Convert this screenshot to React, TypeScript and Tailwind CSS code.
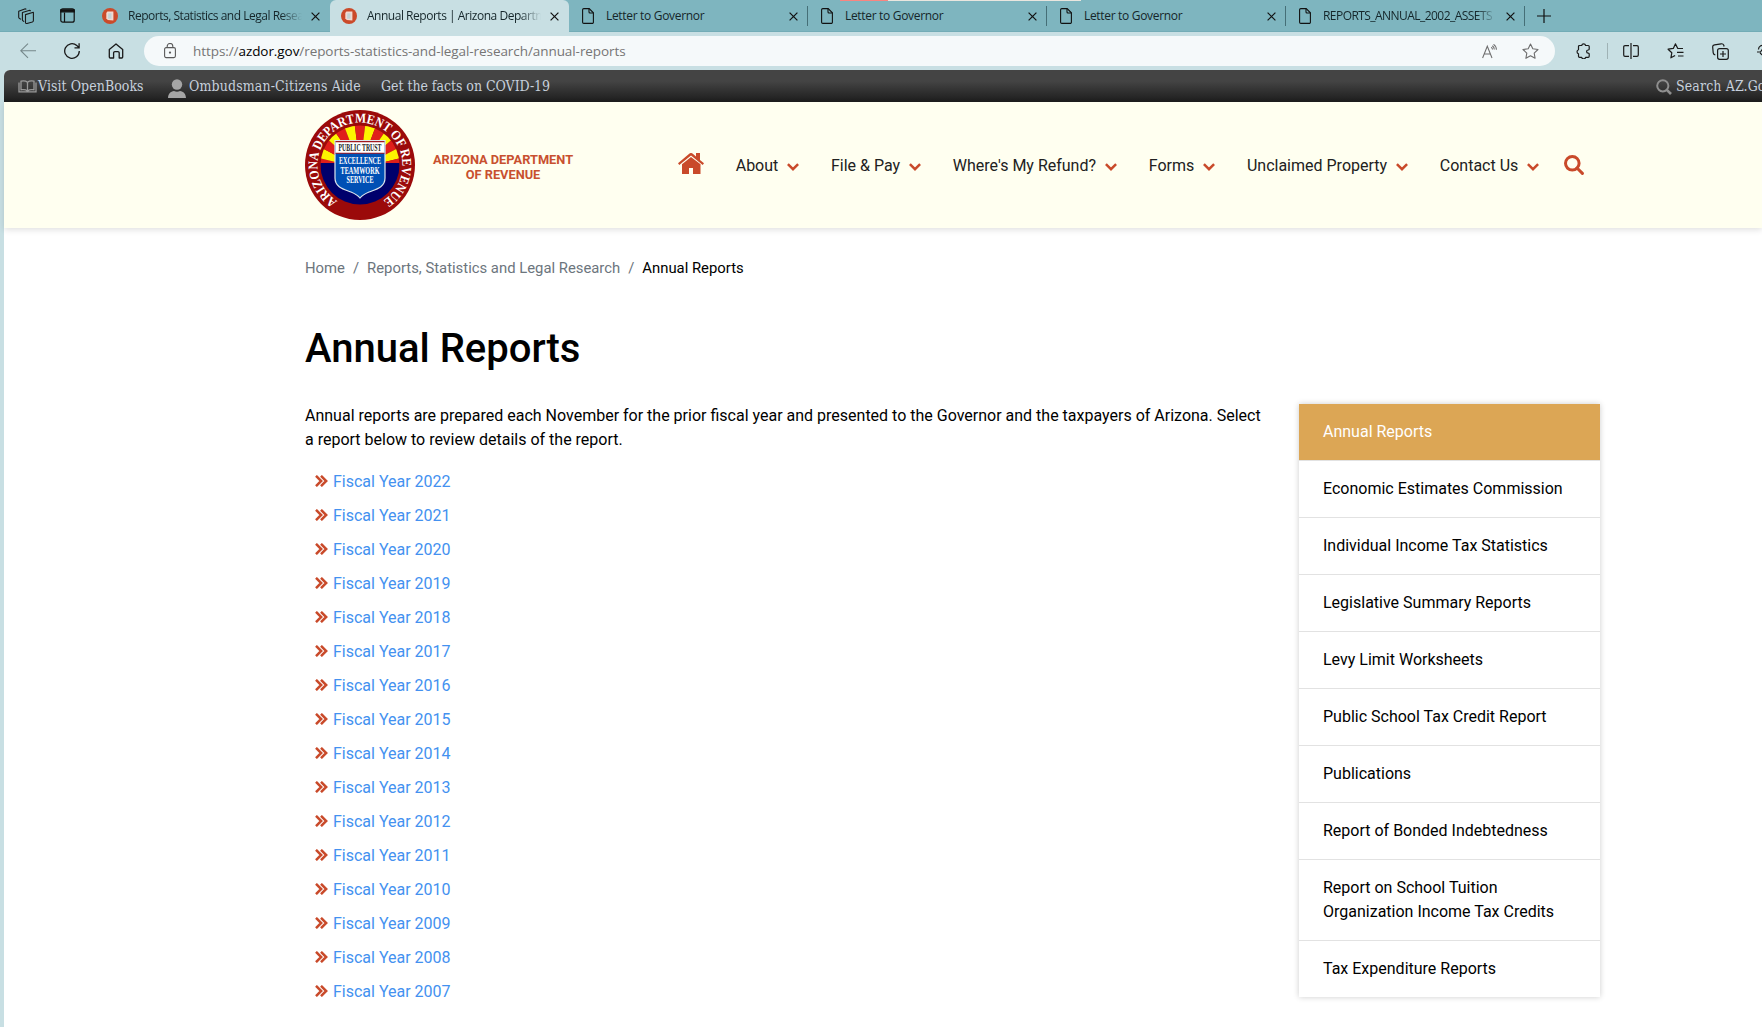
import type { ReactNode } from 'react'

const years = Array.from({ length: 16 }, (_, i) => 2022 - i)

const sideLinks = [
  'Economic Estimates Commission',
  'Individual Income Tax Statistics',
  'Legislative Summary Reports',
  'Levy Limit Worksheets',
  'Public School Tax Credit Report',
  'Publications',
  'Report of Bonded Indebtedness',
  'Report on School Tuition Organization Income Tax Credits',
  'Tax Expenditure Reports',
]

const navItems = ['About', 'File & Pay', "Where's My Refund?", 'Forms', 'Unclaimed Property', 'Contact Us']

function Favicon() {
  return (
    <svg className="h-4 w-4 shrink-0" viewBox="0 0 16 16">
      <circle cx="8" cy="8" r="8" fill="#cb4a2a" />
      <path d="M5.400 3.400h6v9.200l-5.600-.7-1.500-1.500V5z" fill="#f1d9d2" />
      <path d="M6.300 5.200h3.200v5.600H6z" fill="#c3d3d6" />
    </svg>
  )
}

function DocIcon() {
  return (
    <svg className="h-4 w-3 shrink-0" viewBox="0 0 12 16" fill="none" stroke="#111" strokeWidth="1.1">
      <path d="M1.8.6h5.4l4.2 4.2v9.4a1.2 1.2 0 0 1-1.2 1.2H1.8A1.2 1.2 0 0 1 .6 14.2V1.8A1.2 1.2 0 0 1 1.8.6z" />
      <path d="M7 .8V4a1 1 0 0 0 1 1h3.2" />
    </svg>
  )
}

function CloseIcon() {
  return (
    <svg className="h-[9px] w-[9px] shrink-0" viewBox="0 0 9 9" stroke="#111" strokeWidth="1.2">
      <path d="M.6.6l7.8 7.8M8.4.6.6 8.4" />
    </svg>
  )
}

type TabProps = { title: string; doc?: boolean; active?: boolean; sep?: boolean; fade?: boolean; tight?: boolean }

function Tab({ title, doc, active, sep, fade, tight }: TabProps) {
  return (
    <div
      className={`flex h-8 w-[239px] shrink-0 items-center pr-[9px] ${doc ? 'pl-[13px]' : 'pl-[11px]'} ${
        active ? 'rounded-t-md bg-[#c8dfe3]' : ''
      }`}
    >
      {doc ? <DocIcon /> : <Favicon />}
      <div
        className={`w-[174px] shrink-0 overflow-hidden whitespace-nowrap text-[12px] leading-8 text-[#15262a] ${
          tight ? 'tracking-[-0.55px]' : fade ? 'tracking-[-0.48px]' : 'tracking-[-0.32px]'
        } ${doc ? 'ml-[12px]' : 'ml-[10px]'} ${fade ? '[mask-image:linear-gradient(to_right,#000_88%,transparent_100%)]' : ''}`}
      >
        {title}
      </div>
      <div className="ml-auto flex items-center">
        <CloseIcon />
        <div className={`ml-[9px] -mr-[9px] h-5 w-px ${sep ? 'bg-[#456f77]' : ''}`} />
      </div>
    </div>
  )
}

function TabStrip() {
  return (
    <div className="relative flex h-8 items-center border-b border-[#73acb6] bg-[#7eb5bf]">
      <div className="absolute left-[840px] top-0 flex h-px">
        <div className="w-12 bg-[#f98580]" />
        <div className="w-[193px] bg-[#e9e6df]" />
      </div>
      <svg className="ml-[18px] h-4 w-4" viewBox="0 0 16 16" fill="none" stroke="#1a1a1a" strokeWidth="1.1" strokeLinejoin="round">
        <path d="M7.5 6.6 15.4 4.3v8.3c0 .8-.4 1.2-1 1.4l-5.5 1.5c-.8.2-1.4-.2-1.4-1z" />
        <path d="M6.2 13.6 5.2 13c-.6-.3-.8-.6-.8-1.3V4.6L11 2.5c.6-.2 1.2 0 1.6.6M3 11.4l-1.400-.9C1 10.200.7 9.800.7 9.200V3.300L6.700 1c.6-.2 1.200 0 1.600.4" />
      </svg>
      <svg className="ml-[26px] h-[15px] w-[15px]" viewBox="0 0 15 15" fill="none" stroke="#111" strokeWidth="1.2">
        <rect x=".8" y=".8" width="13.400" height="13.400" rx="2" />
        <path d="M.8 1.800h13.400v2H.8z" fill="#111" />
        <path d="M4.500 4.500v9.500" />
      </svg>
      <div className="ml-4 flex h-8 self-start font-['Open_Sans',sans-serif]">
        <Tab title="Reports, Statistics and Legal Research" fade />
        <Tab title="Annual Reports | Arizona Department of Revenue" active fade />
        <Tab title="Letter to Governor" doc sep />
        <Tab title="Letter to Governor" doc sep />
        <Tab title="Letter to Governor" doc sep />
        <Tab title="REPORTS_ANNUAL_2002_ASSETS" doc sep fade tight />
      </div>
      <svg className="ml-[12px] h-[14px] w-[14px]" viewBox="0 0 14 14" stroke="#111" strokeWidth="1.2">
        <path d="M7 0v14M0 7h14" />
      </svg>
    </div>
  )
}

function Toolbar() {
  return (
    <div className="flex h-[38px] items-center bg-[#c8dfe3]">
      <svg className="ml-5 h-4 w-4 shrink-0" viewBox="0 0 16 16" fill="none" stroke="#76888b" strokeWidth="1.1">
        <path d="M16 7.700H.8M8 .6.8 7.700 8 14.900" />
      </svg>
      <svg className="ml-[28px] h-4 w-4 shrink-0" viewBox="0 0 16 16" fill="none" stroke="#1a1a1a" strokeWidth="1.300">
        <path d="M15.300 8A7.300 7.300 0 1 1 12.800 2.500L15 4.600M15.100.300v4.500h-4.600" />
      </svg>
      <svg className="ml-[28px] h-4 w-4 shrink-0" viewBox="0 0 16 16" fill="none" stroke="#1a1a1a" strokeWidth="1.300" strokeLinejoin="round">
        <path d="M1.300 6.500 8 .9l6.700 5.600V14a1 1 0 0 1-1 1h-2.500V10a1.300 1.300 0 0 0-1.300-1.300H6.900A1.300 1.300 0 0 0 5.600 10v5H2.300a1 1 0 0 1-1-1z" />
      </svg>
      <div className="ml-5 flex h-[30px] w-[1411px] shrink-0 items-center rounded-full bg-[#f5f9fa] pl-5 pr-4">
        <svg className="h-4 w-3" viewBox="0 0 12 16" fill="none" stroke="#5a5a5a" strokeWidth="1.100">
          <rect x=".6" y="4.600" width="10.800" height="10" rx="1.500" />
          <path d="M3.200 4.600V3.300a2.800 2.800 0 0 1 5.600 0v1.300" />
          <circle cx="6" cy="9.600" r=".6" fill="#5a5a5a" />
        </svg>
        <div className="ml-[17px] whitespace-nowrap pt-px font-['Open_Sans',sans-serif] text-[13.500px] tracking-[-0.07px] text-[#757575]">
          https://<span className="text-black">azdor.gov</span>/reports-statistics-and-legal-research/annual-reports
        </div>
        <svg className="ml-auto h-[15px] w-4" viewBox="0 0 16 15" fill="none" stroke="#6d6d6d" strokeWidth="1.050">
          <path d="M.6 14 5.300 2.200 10 14M2.200 10h6.200M9.200 3.200c.9.500 1.300 1.200 1.300 2.300M10.300 1.700c1.300.8 2 2 2 3.800M11.500.400c1.900 1.200 2.900 2.800 2.900 5.300" />
        </svg>
        <svg className="ml-6 h-[17px] w-[17px]" viewBox="0 0 17 17" fill="none" stroke="#6d6d6d" strokeWidth="1.100" strokeLinejoin="round">
          <path d="M8.500 1l2.300 4.800 5.200.7-3.800 3.600.9 5.200-4.600-2.500-4.600 2.500.9-5.200L1 6.500l5.200-.7z" />
        </svg>
      </div>
      <svg className="ml-[21px] h-4 w-[15px] shrink-0" viewBox="0 0 15 16" fill="none" stroke="#1a1a1a" strokeWidth="1.200" strokeLinejoin="round">
        <path d="M3.500 2.500h2.200a2 2 0 0 1 3.900 0h2.600a1 1 0 0 1 1 1v2.700a1 1 0 0 1-1 .8 1.600 1.600 0 0 0 0 3.200c.6 0 1 .3 1 .9v2.200a1 1 0 0 1-1 1H9.600a2 2 0 0 1-3.900 0H3.500a1 1 0 0 1-1-1v-2.500a2.100 2.100 0 0 1 0-4V3.500a1 1 0 0 1 1-1z" />
      </svg>
      <div className="ml-4 h-4 w-px shrink-0 bg-[#9fb2b5]" />
      <svg className="ml-[15px] h-4 w-4 shrink-0" viewBox="0 0 16 16" fill="none" stroke="#1a1a1a" strokeWidth="1.200">
        <path d="M6 2.600H2A1.300 1.300 0 0 0 .7 3.900v8.200A1.300 1.300 0 0 0 2 13.400h4M10 2.600h4a1.300 1.300 0 0 1 1.300 1.300v8.200a1.300 1.300 0 0 1-1.300 1.300h-4M8 0v16" />
      </svg>
      <svg className="ml-[28px] h-4 w-[17px] shrink-0" viewBox="0 0 17 16" fill="none" stroke="#1a1a1a" strokeWidth="1.200" strokeLinejoin="round">
        <path d="M11.200 5.500h-.4L8.400.9 6.300 5.400l-5.200.8 3.700 3.600-.9 5 4.200-2.300M11 5.500h5M10 9.300h6.500M11 13h5.500" />
      </svg>
      <svg className="ml-[28px] h-[17px] w-[17px] shrink-0" viewBox="0 0 17 17" fill="none" stroke="#1a1a1a" strokeWidth="1.200">
        <rect x="5.600" y="5.600" width="10.700" height="10.700" rx="2" />
        <path d="M11 8v6M8 11h6M3.300 12C2 11.600 1.400 11 1.200 9.800L.7 4.200C.5 2.800 1.200 2 2.500 1.800L9.200.8c1.300-.2 2.100.3 2.600 1.500l.3 1.200" />
      </svg>
      <svg className="ml-[28px] h-4 w-4 shrink-0" viewBox="0 0 16 16" fill="none" stroke="#1a1a1a" strokeWidth="1.200">
        <path d="M1.500 6.500A4 4 0 0 1 8 3.200 4 4 0 0 1 14.500 8L8 14.500 3 10M0 9h3.500l2-3 2 5 1.500-2H12" />
      </svg>
    </div>
  )
}

function StateBar() {
  return (
    <div className="flex h-8 items-center overflow-hidden whitespace-nowrap rounded-tl-md bg-linear-to-b from-[#444] from-35% to-[#1d1d1d] font-['DejaVu_Serif_Condensed','DejaVu_Serif',serif] text-[14px] tracking-[0.13px] text-[#c7d0dc]">
      <svg className="ml-[14px] mt-px h-[13px] w-[19px] shrink-0" viewBox="0 0 19 13" fill="none" stroke="#9a9a9a" strokeWidth="1.300">
        <path d="M9.500 2.200C8 1 5 .8 3 1.200v8.600c2.400-.3 5 0 6.500 1.200C11 9.800 13.600 9.500 16 9.800V1.200c-2-.4-5-.2-6.500 1zM9.500 2v9M1 2.500v9.300h17V2.500" />
      </svg>
      <span className="w-[107px] shrink-0 pl-px tracking-[0.05px]">Visit OpenBooks</span>
      <svg className="ml-6 mt-[5px] h-[19px] w-[18px] shrink-0" viewBox="0 0 18 19" fill="#a5a5a5">
        <circle cx="9" cy="5.500" r="5.200" />
        <path d="M0 19c.3-4.500 2.500-6.500 6-7 1.900 1 4.100 1 6 0 3.500.5 5.700 2.500 6 7z" />
      </svg>
      <span className="ml-[3px] w-[192px] shrink-0">Ombudsman-Citizens Aide</span>
      <span className="tracking-[-0.04px]">Get the facts on COVID-19</span>
      <svg className="ml-auto mt-[2px] h-4 w-4 shrink-0" viewBox="0 0 16 16" fill="none" stroke="#8f8f8f" strokeWidth="2">
        <circle cx="6.800" cy="6.800" r="5.600" />
        <path d="M10.800 10.800 15 15" strokeWidth="2.600" />
      </svg>
      <span className="ml-1 w-[86px] shrink-0">Search AZ.Gov</span>
    </div>
  )
}

/* Thirteen rays fan out across the upper half of the seal. */
function ray(i: number) {
  const at = (k: number) => {
    const a = Math.PI - (k * Math.PI) / 13
    return `${55 + 60 * Math.cos(a)} ${58 - 60 * Math.sin(a)}`
  }
  return `M55 58L${at(i)}L${at(i + 1)}Z`
}

function Seal() {
  return (
    <svg className="h-[110px] w-[110px] shrink-0" viewBox="0 0 110 110">
      <defs>
        <clipPath id="seal-inner">
          <circle cx="55" cy="55" r="39.500" />
        </clipPath>
        <path id="seal-text" d="M32.500 91A42.400 42.400 0 1 1 77.500 91" />
      </defs>
      <circle cx="55" cy="55" r="55" fill="#9b0a0a" />
      <g clipPath="url(#seal-inner)">
        {Array.from({ length: 13 }, (_, i) => (
          <path key={i} d={ray(i)} fill={i % 2 ? '#fdf500' : '#e01f1b'} />
        ))}
        <rect y="53" width="110" height="57" fill="#00006c" />
      </g>
      <text fontFamily="Liberation Serif, serif" fontSize="13.500" fontWeight="700" fill="#fff" textLength="218" lengthAdjust="spacingAndGlyphs">
        <textPath href="#seal-text" textLength="218" lengthAdjust="spacingAndGlyphs">
          ARIZONA DEPARTMENT OF REVENUE
        </textPath>
      </text>
      <path d="M30 30.500H80V68c0 9-8 11-16 14-4 1.700-7 3.500-9 6-2-2.500-5-4.300-9-6-8-3-16-5-16-14z" fill="#0050b5" stroke="#dde6ee" strokeWidth="1.200" />
      <path d="M30.600 31h48.800v12H30.600z" fill="#fff" />
      <path d="M30.600 31.600h48.800M30.600 43.200h48.800" stroke="#a01820" strokeWidth="1.100" />
      <g fontFamily="Liberation Serif, serif" fontWeight="700" fontSize="10" textAnchor="middle">
        <text x="55" y="41" fill="#222" textLength="43" lengthAdjust="spacingAndGlyphs">PUBLIC TRUST</text>
        <text x="55" y="54" fill="#fff" textLength="42" lengthAdjust="spacingAndGlyphs">EXCELLENCE</text>
        <text x="55" y="63.500" fill="#fff" textLength="39" lengthAdjust="spacingAndGlyphs">TEAMWORK</text>
        <text x="55" y="73" fill="#fff" textLength="27" lengthAdjust="spacingAndGlyphs">SERVICE</text>
      </g>
    </svg>
  )
}

function NavItem({ children }: { children: ReactNode }) {
  return (
    <div className="flex items-center whitespace-nowrap text-base text-[#212121]">
      {children}
      <svg className="ml-[8.500px] mt-px h-2 w-3" viewBox="0 0 12 8" fill="none" stroke="#c94a2a" strokeWidth="2.500">
        <path d="M.9 1.200l5.100 5 5.100-5" />
      </svg>
    </div>
  )
}

function Header() {
  return (
    <header className="relative flex h-[126px] items-center bg-[#fffff0] pl-[301px] shadow-[0_2px_6px_rgba(0,0,0,0.12)]">
      <Seal />
      <div className="ml-[12px] mt-[3px] w-[152px] whitespace-nowrap text-center text-[12.800px] font-bold leading-[15px] text-[#c8502f]">
        ARIZONA DEPARTMENT
        <br />
        OF REVENUE
      </div>
      <svg className="-mt-[3px] ml-[99px] h-[21px] w-[26px]" viewBox="0 0 26 21" fill="#c94a2a">
        <path d="M0 10.200 11.500.6a2.300 2.300 0 0 1 3 0L18 3.500V0h4v6.900l4 3.300-1.300 1.700L13 2.600 1.300 11.900z" />
        <path d="M4 11.200 13 4l9.500 7.200V21H15v-6h-4v6H4z" />
      </svg>
      <nav className="ml-[31.700px] mt-[2px] flex gap-[32.200px]">
        {navItems.map((n) => (
          <NavItem key={n}>{n}</NavItem>
        ))}
      </nav>
      <svg className="ml-[25px] h-5 w-5" viewBox="0 0 20 20" fill="none" stroke="#c94a2a" strokeWidth="3">
        <circle cx="8.300" cy="8.300" r="6.800" />
        <path d="M13 13l5.400 5.400" strokeLinecap="round" />
      </svg>
    </header>
  )
}

function Bullet() {
  return (
    <svg className="-mt-[3px] h-3 w-[13px]" viewBox="0 0 13 12" fill="none" stroke="#c94a2a" strokeWidth="2.500">
      <path d="M1 .8 6.200 6 1 11.200M6 .8 11.200 6 6 11.200" />
    </svg>
  )
}

export default function App() {
  return (
    <div className="flex h-[1027px] w-[1762px] flex-col overflow-hidden bg-[#c8dfe3] font-[Roboto,sans-serif]">
      <TabStrip />
      <Toolbar />
      <div className="ml-1 flex grow flex-col rounded-tl-md bg-white">
        <StateBar />
        <Header />
        <main className="w-[1596px] pl-[301px]">
          <div className="mt-7 flex h-6 items-center gap-2 text-[14.850px] text-[#6c757d]">
            <span>Home</span>
            <span>/</span>
            <span>Reports, Statistics and Legal Research</span>
            <span>/</span>
            <span className="text-black">Annual Reports</span>
          </div>
          <h1 className="mt-[45px] text-[40px] font-medium leading-12 text-black">Annual Reports</h1>
          <div className="mt-[31px] flex items-start justify-between">
            <div className="w-[964px]">
              <p className="text-base text-black">
                Annual reports are prepared each November for the prior fiscal year and presented to the Governor and the taxpayers of Arizona. Select a report below to review details of the report.
              </p>
              <ul className="mt-[13px]">
                {years.map((y) => (
                  <li key={y} className="flex h-[34px] items-center pl-[10px]">
                    <Bullet />
                    <a className="ml-[5px] text-base text-[#4391f0]">Fiscal Year {y}</a>
                  </li>
                ))}
              </ul>
            </div>
            <aside className="w-[301px] bg-white text-base shadow-[0_0_6px_rgba(0,0,0,0.2)]">
              <div className="border-b border-[#e2e2e2] bg-[#dca655] px-6 py-4 text-white">Annual Reports</div>
              {sideLinks.map((l) => (
                <div key={l} className="border-b border-[#e2e2e2] px-6 py-4 text-black last:border-b-0">
                  {l}
                </div>
              ))}
            </aside>
          </div>
        </main>
      </div>
    </div>
  )
}
